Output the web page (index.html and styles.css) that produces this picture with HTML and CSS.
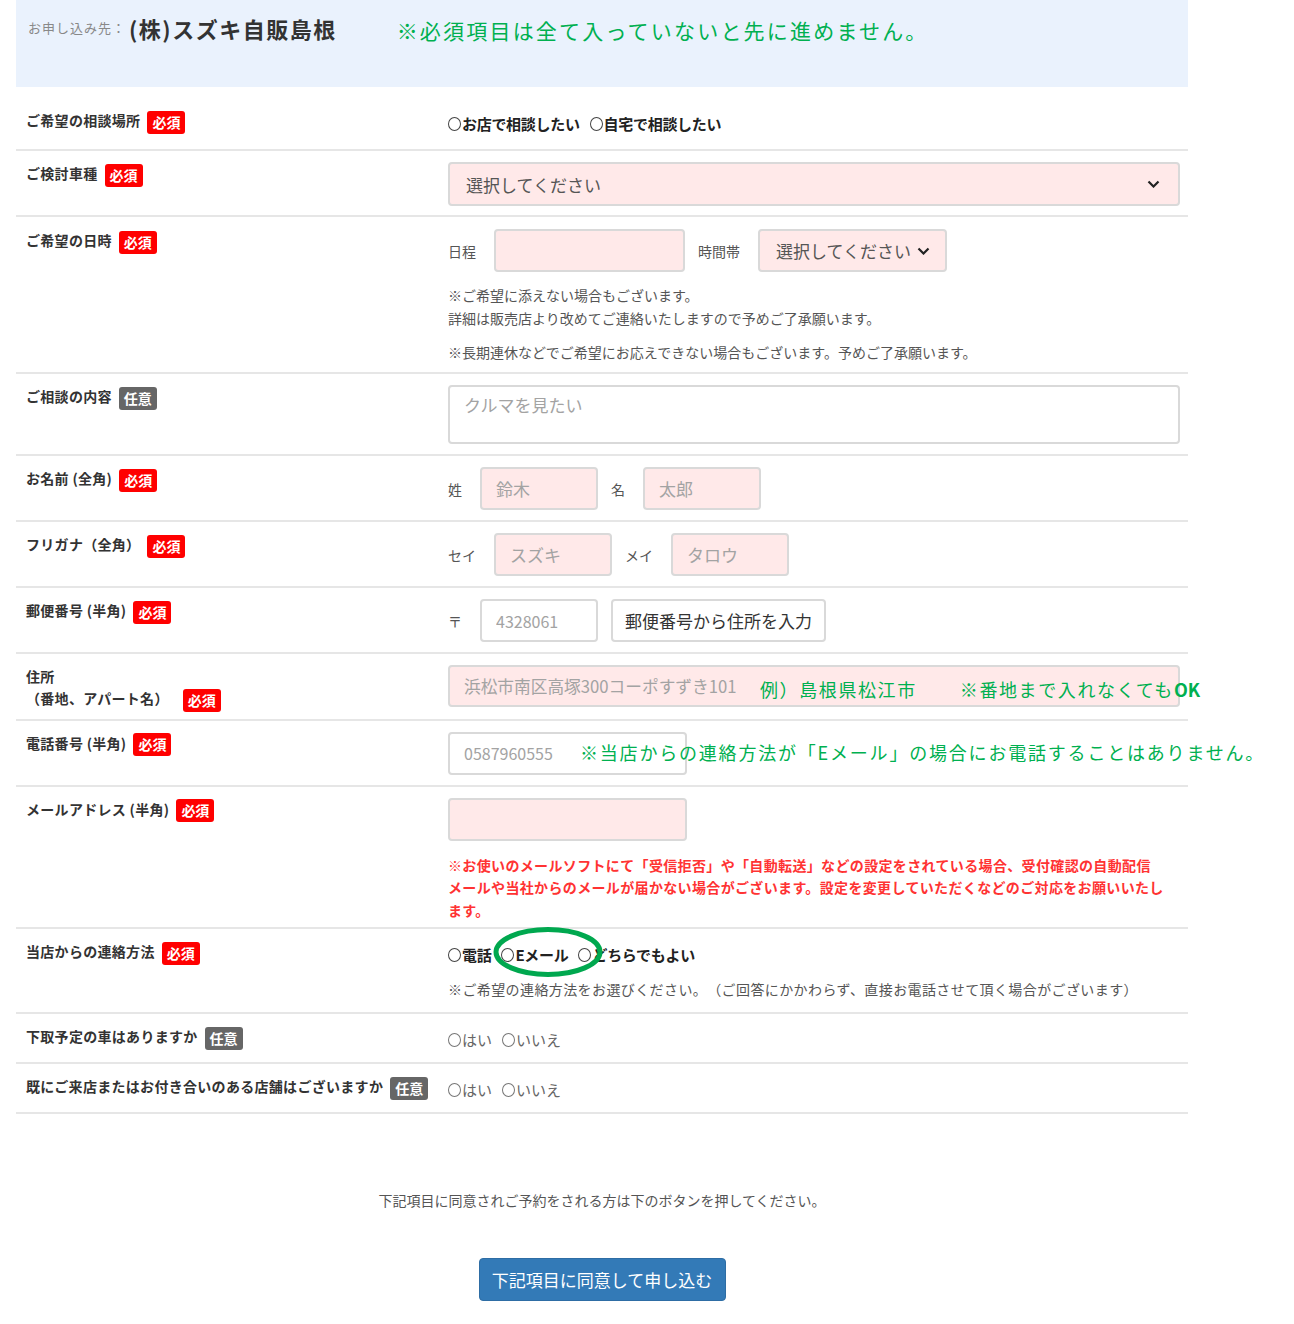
FILE: index.html
```html
<!DOCTYPE html>
<html lang="ja">
<head>
	<meta charset="UTF-8">
	<title>ご相談予約フォーム</title>
	<link rel="stylesheet" href="styles.css">
</head>
<body>
<div class="wrap">
	<div class="head">
		<span class="head-to">お申し込み先：</span>
		<span class="head-shop">(株)スズキ自販島根</span>
		<span class="head-note">※必須項目は全て入っていないと先に進めません。</span>
	</div>

	<div class="row first">
		<div class="label">ご希望の相談場所<span class="req">必須</span></div>
		<div class="field">
			<div class="radios">
				<label class="radio"><input type="radio" name="place">お店で相談したい</label>
				<label class="radio"><input type="radio" name="place">自宅で相談したい</label>
			</div>
		</div>
	</div>

	<div class="row car">
		<div class="label">ご検討車種<span class="req">必須</span></div>
		<div class="field">
			<span class="sel full">
				<select><option>選択してください</option></select>
				<svg width="13" height="8" viewBox="0 0 13 8"><path d="M1.5 1.5 L6.5 6.5 L11.5 1.5" fill="none" stroke="#222" stroke-width="2.2"/></svg>
			</span>
		</div>
	</div>

	<div class="row date">
		<div class="label">ご希望の日時<span class="req">必須</span></div>
		<div class="field">
			<div class="line">
				<span class="sub">日程</span><input class="inp pink w191" type="text">
				<span class="sub">時間帯</span>
				<span class="sel time">
					<select><option>選択してください</option></select>
					<svg width="13" height="8" viewBox="0 0 13 8"><path d="M1.5 1.5 L6.5 6.5 L11.5 1.5" fill="none" stroke="#222" stroke-width="2.2"/></svg>
				</span>
			</div>
			<p class="note">※ご希望に添えない場合もございます。<br>詳細は販売店より改めてご連絡いたしますので予めご了承願います。</p>
			<p class="note">※長期連休などでご希望にお応えできない場合もございます。予めご了承願います。</p>
		</div>
	</div>

	<div class="row">
		<div class="label">ご相談の内容<span class="opt">任意</span></div>
		<div class="field">
			<textarea class="memo" placeholder="クルマを見たい"></textarea>
		</div>
	</div>

	<div class="row">
		<div class="label">お名前 (全角)<span class="req">必須</span></div>
		<div class="field">
			<div class="line">
				<span class="sub">姓</span><input class="inp pink w118" type="text" placeholder="鈴木">
				<span class="sub">名</span><input class="inp pink w118" type="text" placeholder="太郎">
			</div>
		</div>
	</div>

	<div class="row">
		<div class="label">フリガナ（全角）<span class="req">必須</span></div>
		<div class="field">
			<div class="line">
				<span class="sub">セイ</span><input class="inp pink w118" type="text" placeholder="スズキ">
				<span class="sub">メイ</span><input class="inp pink w118" type="text" placeholder="タロウ">
			</div>
		</div>
	</div>

	<div class="row">
		<div class="label">郵便番号 (半角)<span class="req">必須</span></div>
		<div class="field">
			<div class="line">
				<span class="sub">〒</span><input class="inp num w118" type="text" placeholder="4328061">
				<button class="zip" type="button">郵便番号から住所を入力</button>
			</div>
		</div>
	</div>

	<div class="row address">
		<div class="label two">住所<br>（番地、アパート名）<span class="req">必須</span></div>
		<div class="field">
			<input class="inp pink full addr" type="text" placeholder="浜松市南区高塚300コーポすずき101">
			<span class="green addr-note">例）島根県松江市<span class="gap">※番地まで入れなくても<b>OK</b></span></span>
		</div>
	</div>

	<div class="row">
		<div class="label">電話番号 (半角)<span class="req">必須</span></div>
		<div class="field">
			<input class="inp num w239" type="text" placeholder="0587960555">
			<span class="green tel-note">※当店からの連絡方法が「Eメール」の場合にお電話することはありません。</span>
		</div>
	</div>

	<div class="row mail">
		<div class="label">メールアドレス (半角)<span class="req">必須</span></div>
		<div class="field">
			<input class="inp pink w239" type="text">
			<p class="warn">※お使いのメールソフトにて「受信拒否」や「自動転送」などの設定をされている場合、受付確認の自動配信<br>メールや当社からのメールが届かない場合がございます。設定を変更していただくなどのご対応をお願いいたし<br>ます。</p>
		</div>
	</div>

	<div class="row contact">
		<div class="label">当店からの連絡方法<span class="req">必須</span></div>
		<div class="field">
			<div class="radios">
				<label class="radio"><input type="radio" name="way">電話</label>
				<label class="radio"><input type="radio" name="way">Eメール</label>
				<label class="radio"><input type="radio" name="way">どちらでもよい</label>
				<svg class="circle" width="110" height="50" viewBox="0 0 110 50"><ellipse cx="55" cy="25" rx="52" ry="22.5" fill="none" stroke="#00a84f" stroke-width="5"/></svg>
			</div>
			<p class="note">※ご希望の連絡方法をお選びください。（ご回答にかかわらず、直接お電話させて頂く場合がございます）</p>
		</div>
	</div>

	<div class="row short">
		<div class="label">下取予定の車はありますか<span class="opt">任意</span></div>
		<div class="field">
			<div class="radios light">
				<label class="radio"><input type="radio" name="trade">はい</label>
				<label class="radio"><input type="radio" name="trade">いいえ</label>
			</div>
		</div>
	</div>

	<div class="row short">
		<div class="label">既にご来店またはお付き合いのある店舗はございますか<span class="opt">任意</span></div>
		<div class="field">
			<div class="radios light">
				<label class="radio"><input type="radio" name="shop">はい</label>
				<label class="radio"><input type="radio" name="shop">いいえ</label>
			</div>
		</div>
	</div>

	<p class="agree">下記項目に同意されご予約をされる方は下のボタンを押してください。</p>
	<button class="submit" type="button">下記項目に同意して申し込む</button>
</div>
</body>
</html>
```

FILE: styles.css
```css
*{
	box-sizing: border-box;
}
body{
	margin: 0;
	background: #fff;
	color: #333;
	font-family: "Noto Sans CJK JP", "Noto Sans", sans-serif;
	text-spacing-trim: space-all;
}
.wrap{
	width: 1172px;
	margin-left: 16px;
}
.head{
	height: 87px;
	background: #eaf2fd;
	padding: 12px 0 0 12px;
	display: flex;
	align-items: flex-start;
}
.head-to{
	font-size: 13px;
	letter-spacing: 1px;
	color: #888;
	line-height: 32px;
}
.head-shop{
	margin-left: 3px;
	font-size: 22px;
	font-weight: bold;
	letter-spacing: 1.5px;
	line-height: 32px;
}
.head-note{
	margin: 2px 0 0 60px;
	font-size: 21px;
	letter-spacing: 2.2px;
	line-height: 32px;
	color: #00b050;
}

.row{
	display: flex;
	padding: 11px 0 10px;
	border-bottom: 2px solid #e6e6e6;
}
.row.first{
	padding: 22px 0 15px;
}
.row.car{
	padding-bottom: 9px;
}
.row.date{
	padding: 12px 0 8px;
}
.row.address{
	padding-bottom: 9px;
}
.row.mail{
	padding-bottom: 6px;
}
.row.contact{
	padding-bottom: 11px;
}
.row.short{
	padding-bottom: 12px;
}
.label{
	width: 432px;
	flex: none;
	padding: 1px 0 0 10px;
	font-size: 14px;
	font-weight: bold;
	line-height: 20px;
	letter-spacing: .3px;
}
.label.two{
	line-height: 22px;
	padding-top: 0;
}
.req,.opt{
	display: inline-block;
	margin-left: 7px;
	padding: 2px 5px;
	border-radius: 3px;
	color: #fff;
	font-size: 14px;
	line-height: 19px;
	letter-spacing: 0;
	vertical-align: middle;
}
.req{
	background: #f00;
}
.opt{
	background: #666;
}
.label.two .req{
	margin: -2px 0 -2px 14px;
}
.field{
	flex: 1;
	position: relative;
	padding-right: 8px;
	font-size: 14px;
}

.radios{
	position: relative;
	display: flex;
	margin-top: 5px;
	line-height: 20px;
}
.radio{
	display: inline-flex;
	align-items: center;
	margin-right: 10px;
	font-size: 15px;
	font-weight: bold;
	letter-spacing: -.3px;
	color: #222;
}
.radio input{
	appearance: none;
	-webkit-appearance: none;
	width: 13px;
	height: 14px;
	margin: 0 1px 0 0;
	border: 1px solid #444;
	border-radius: 50%;
	background: #fff;
}
.radios.light .radio{
	font-weight: normal;
	letter-spacing: 0;
	color: #666;
}
.radios.light .radio input{
	border-color: #777;
}
.circle{
	position: absolute;
	left: 45px;
	top: -18px;
}

.line{
	display: flex;
	align-items: center;
}
.sub{
	margin-right: 18px;
	color: #555;
	font-size: 14px;
}
.line .inp,.line .sel{
	margin-right: 13px;
}
.inp{
	height: 43px;
	border: 2px solid #d9d9d9;
	border-radius: 4px;
	background: #fff;
	padding: 0 14px;
	font-family: inherit;
	font-size: 17px;
	color: #333;
}
.inp::placeholder{
	color: #a3a3a3;
}
.inp.num{
	font-size: 16px;
}
.pink{
	background: #ffe9e9;
}
.full{
	width: 732px;
}
.w118{ width: 118px; }
.w191{ width: 191px; }
.w239{ width: 239px; }
.addr{
	height: 42px;
	font-size: 16.7px;
}

.sel{
	position: relative;
	display: inline-block;
}
.sel select{
	appearance: none;
	-webkit-appearance: none;
	width: 100%;
	height: 44px;
	border: 2px solid #d9d9d9;
	border-radius: 4px;
	background: #ffe9e9;
	padding: 0 40px 0 16px;
	font-family: inherit;
	font-size: 17px;
	color: #555;
}
.sel svg{
	position: absolute;
	right: 20px;
	top: 50%;
	margin-top: -4px;
	pointer-events: none;
}
.sel.time{
	width: 189px;
}
.sel.time select{
	height: 43px;
	padding-right: 10px;
}
.sel.time svg{
	right: 17px;
}

.note{
	margin: 12px 0 0;
	font-size: 14px;
	line-height: 23px;
	color: #555;
}
.note + .note{
	margin-top: 11px;
}
.contact .note{
	margin-top: 13px;
	letter-spacing: .4px;
}
.memo{
	display: block;
	width: 732px;
	height: 59px;
	border: 2px solid #d9d9d9;
	border-radius: 4px;
	padding: 6px 14px;
	resize: none;
	font-family: inherit;
	font-size: 17px;
	line-height: 24px;
}
.memo::placeholder{
	color: #a3a3a3;
}
.zip{
	height: 43px;
	border: 2px solid #d9d9d9;
	border-radius: 4px;
	background: #fff;
	padding: 0 12px;
	font-family: inherit;
	font-size: 17px;
	color: #333;
}

.green{
	position: absolute;
	white-space: nowrap;
	font-size: 18px;
	letter-spacing: 1.6px;
	line-height: 26px;
	color: #00b050;
}
.addr-note{
	left: 312px;
	top: 11px;
}
.addr-note .gap{
	margin-left: 43px;
}
.addr-note b{
	letter-spacing: 0;
}
.tel-note{
	left: 132px;
	top: 7px;
	letter-spacing: 1.8px;
}
.warn{
	margin: 13px 0 0;
	font-size: 14px;
	font-weight: bold;
	line-height: 22.5px;
	letter-spacing: .35px;
	color: #f33;
}

.agree{
	margin: 76px 0 0;
	text-align: center;
	font-size: 14px;
	line-height: 20px;
	color: #555;
}
.submit{
	display: block;
	width: 247px;
	height: 43px;
	margin: 48px auto 0;
	border: 1px solid #2e6da4;
	border-radius: 4px;
	background: #337ab7;
	color: #fff;
	font-family: inherit;
	font-size: 17px;
}
```
